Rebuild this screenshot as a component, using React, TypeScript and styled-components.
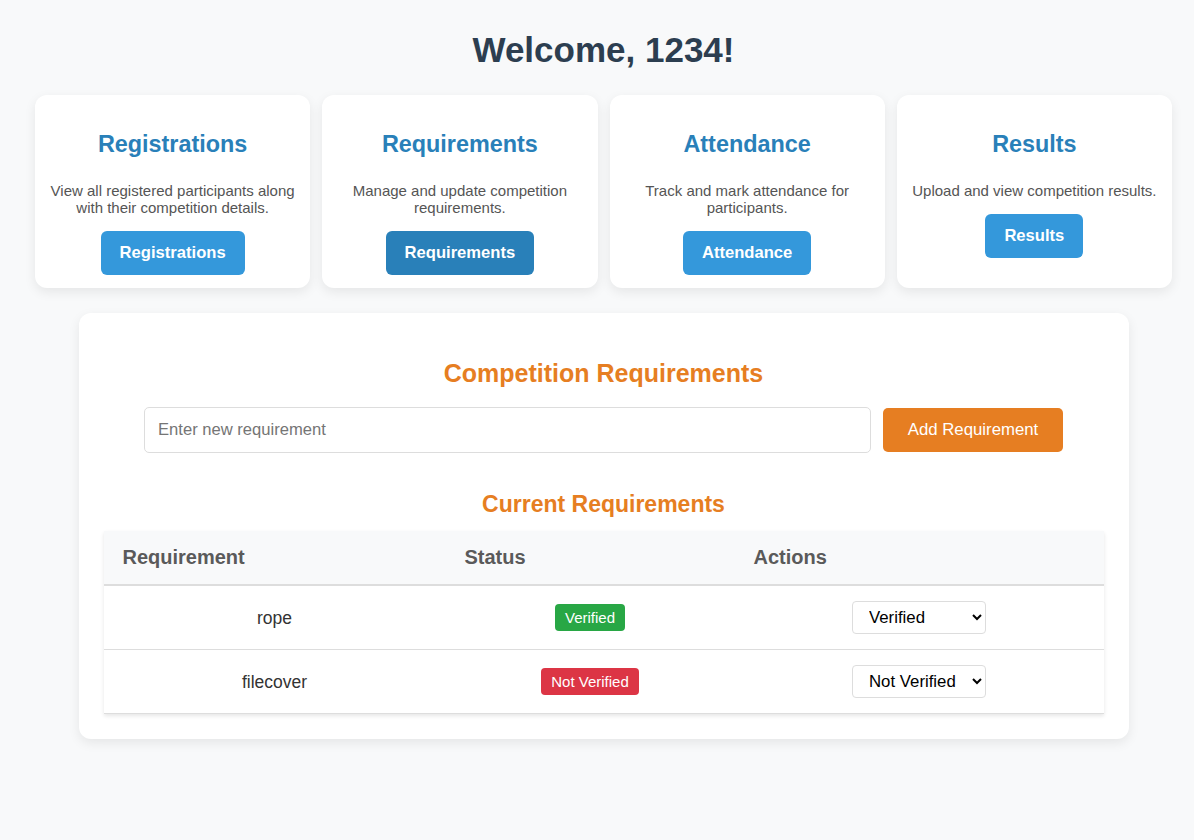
import React from "react";
import styled, { createGlobalStyle } from "styled-components";

const GlobalStyle = createGlobalStyle`
  html, body {
    margin: 0;
    padding: 0;
    background: #f8f9fa;
    font-family: "Liberation Sans", Arial, sans-serif;
  }
  * { box-sizing: border-box; }
`;

const Page = styled.div`
  padding: 30px 22px 40px 35px;
`;

const Title = styled.h1`
  margin: 0 0 25px;
  text-align: center;
  font-size: 35px;
  line-height: 40px;
  font-weight: 700;
  color: #2c3e50;
`;

const CardGrid = styled.div`
  display: grid;
  grid-template-columns: repeat(4, 1fr);
  gap: 12px;
`;

const Card = styled.div`
  background: #fff;
  border-radius: 12px;
  box-shadow: 0 4px 12px rgba(0, 0, 0, 0.08);
  padding: 36px 10px 13px;
  text-align: center;
`;

const CardTitle = styled.h3`
  margin: 0 0 24px;
  font-size: 23.4px;
  line-height: 27px;
  font-weight: 700;
  color: #2980b9;
`;

const CardText = styled.p`
  margin: 0 0 15px;
  font-size: 15px;
  line-height: 17px;
  color: #555;
`;

const CardButton = styled.button<{ $active?: boolean }>`
  border: none;
  border-radius: 6px;
  background: ${(p) => (p.$active ? "#2980b9" : "#3498db")};
  color: #fff;
  font-family: inherit;
  font-size: 16.6px;
  font-weight: 700;
  line-height: 18px;
  padding: 13px 19px;
  cursor: pointer;
`;

const Panel = styled.section`
  width: 1050px;
  margin: 25px auto 0;
  background: #fff;
  border-radius: 12px;
  box-shadow: 0 4px 12px rgba(0, 0, 0, 0.08);
  padding: 46px 25px 25px;
`;

const PanelTitle = styled.h2`
  margin: 0 0 19px;
  text-align: center;
  font-size: 25px;
  line-height: 29px;
  font-weight: 700;
  color: #e67e22;
`;

const AddRow = styled.div`
  display: flex;
  justify-content: center;
  align-items: center;
  gap: 12px;
`;

const TextInput = styled.input`
  width: 727px;
  height: 46px;
  border: 1px solid #ddd;
  border-radius: 5px;
  padding: 0 13px;
  font-family: inherit;
  font-size: 16.6px;
  color: #333;
  outline: none;
  &::placeholder {
    color: #757575;
  }
`;

const AddButton = styled.button`
  width: 180px;
  height: 44px;
  border: none;
  border-radius: 5px;
  background: #e67e22;
  color: #fff;
  font-family: inherit;
  font-size: 16.8px;
  cursor: pointer;
`;

const SubTitle = styled.h3`
  margin: 38px 0 13px;
  text-align: center;
  font-size: 23px;
  line-height: 27px;
  font-weight: 700;
  color: #e67e22;
`;

const Table = styled.table`
  width: 1000px;
  border-collapse: collapse;
  table-layout: fixed;
  box-shadow: 0 2px 4px rgba(0, 0, 0, 0.1);
  background: #fff;
`;

const Col = styled.col<{ $w: number }>`
  width: ${(p) => p.$w}px;
`;

const Th = styled.th`
  background: #f8f9fa;
  text-align: left;
  padding: 15px 19px;
  font-size: 20px;
  line-height: 23px;
  font-weight: 700;
  color: #5a5a5a;
  border-bottom: 2px solid #ddd;
`;

const Td = styled.td`
  text-align: center;
  vertical-align: middle;
  padding: 15px 19px;
  font-size: 17.5px;
  line-height: 20px;
  color: #333;
  border-bottom: 1px solid #ddd;
`;

const Badge = styled.span<{ $ok: boolean }>`
  display: inline-block;
  padding: 5px 10px;
  border-radius: 4px;
  font-size: 15px;
  line-height: 17px;
  color: #fff;
  background: ${(p) => (p.$ok ? "#28a745" : "#dc3545")};
`;

const StatusSelect = styled.select`
  width: 134px;
  height: 33px;
  padding: 0 6px 0 12px;
  border: 1px solid #ddd;
  border-radius: 4px;
  background: #fff;
  font-family: inherit;
  font-size: 16.8px;
  color: #000;
`;

const cards = [
  {
    title: "Registrations",
    text: "View all registered participants along with their competition details.",
    button: "Registrations",
  },
  {
    title: "Requirements",
    text: "Manage and update competition requirements.",
    button: "Requirements",
    active: true,
  },
  {
    title: "Attendance",
    text: "Track and mark attendance for participants.",
    button: "Attendance",
  },
  {
    title: "Results",
    text: "Upload and view competition results.",
    button: "Results",
  },
];

const requirements = [
  { name: "rope", status: "Verified" },
  { name: "filecover", status: "Not Verified" },
];

export default function App() {
  return (
    <>
      <GlobalStyle />
      <Page>
        <Title>Welcome, 1234!</Title>
        <CardGrid>
          {cards.map((c) => (
            <Card key={c.title}>
              <CardTitle>{c.title}</CardTitle>
              <CardText>{c.text}</CardText>
              <CardButton $active={c.active}>{c.button}</CardButton>
            </Card>
          ))}
        </CardGrid>
        <Panel>
          <PanelTitle>Competition Requirements</PanelTitle>
          <AddRow>
            <TextInput placeholder="Enter new requirement" />
            <AddButton>Add Requirement</AddButton>
          </AddRow>
          <SubTitle>Current Requirements</SubTitle>
          <Table>
            <colgroup>
              <Col $w={342} />
              <Col $w={289} />
              <Col $w={369} />
            </colgroup>
            <thead>
              <tr>
                <Th>Requirement</Th>
                <Th>Status</Th>
                <Th>Actions</Th>
              </tr>
            </thead>
            <tbody>
              {requirements.map((r) => (
                <tr key={r.name}>
                  <Td>{r.name}</Td>
                  <Td>
                    <Badge $ok={r.status === "Verified"}>{r.status}</Badge>
                  </Td>
                  <Td>
                    <StatusSelect defaultValue={r.status}>
                      <option value="Verified">Verified</option>
                      <option value="Not Verified">Not Verified</option>
                    </StatusSelect>
                  </Td>
                </tr>
              ))}
            </tbody>
          </Table>
        </Panel>
      </Page>
    </>
  );
}
